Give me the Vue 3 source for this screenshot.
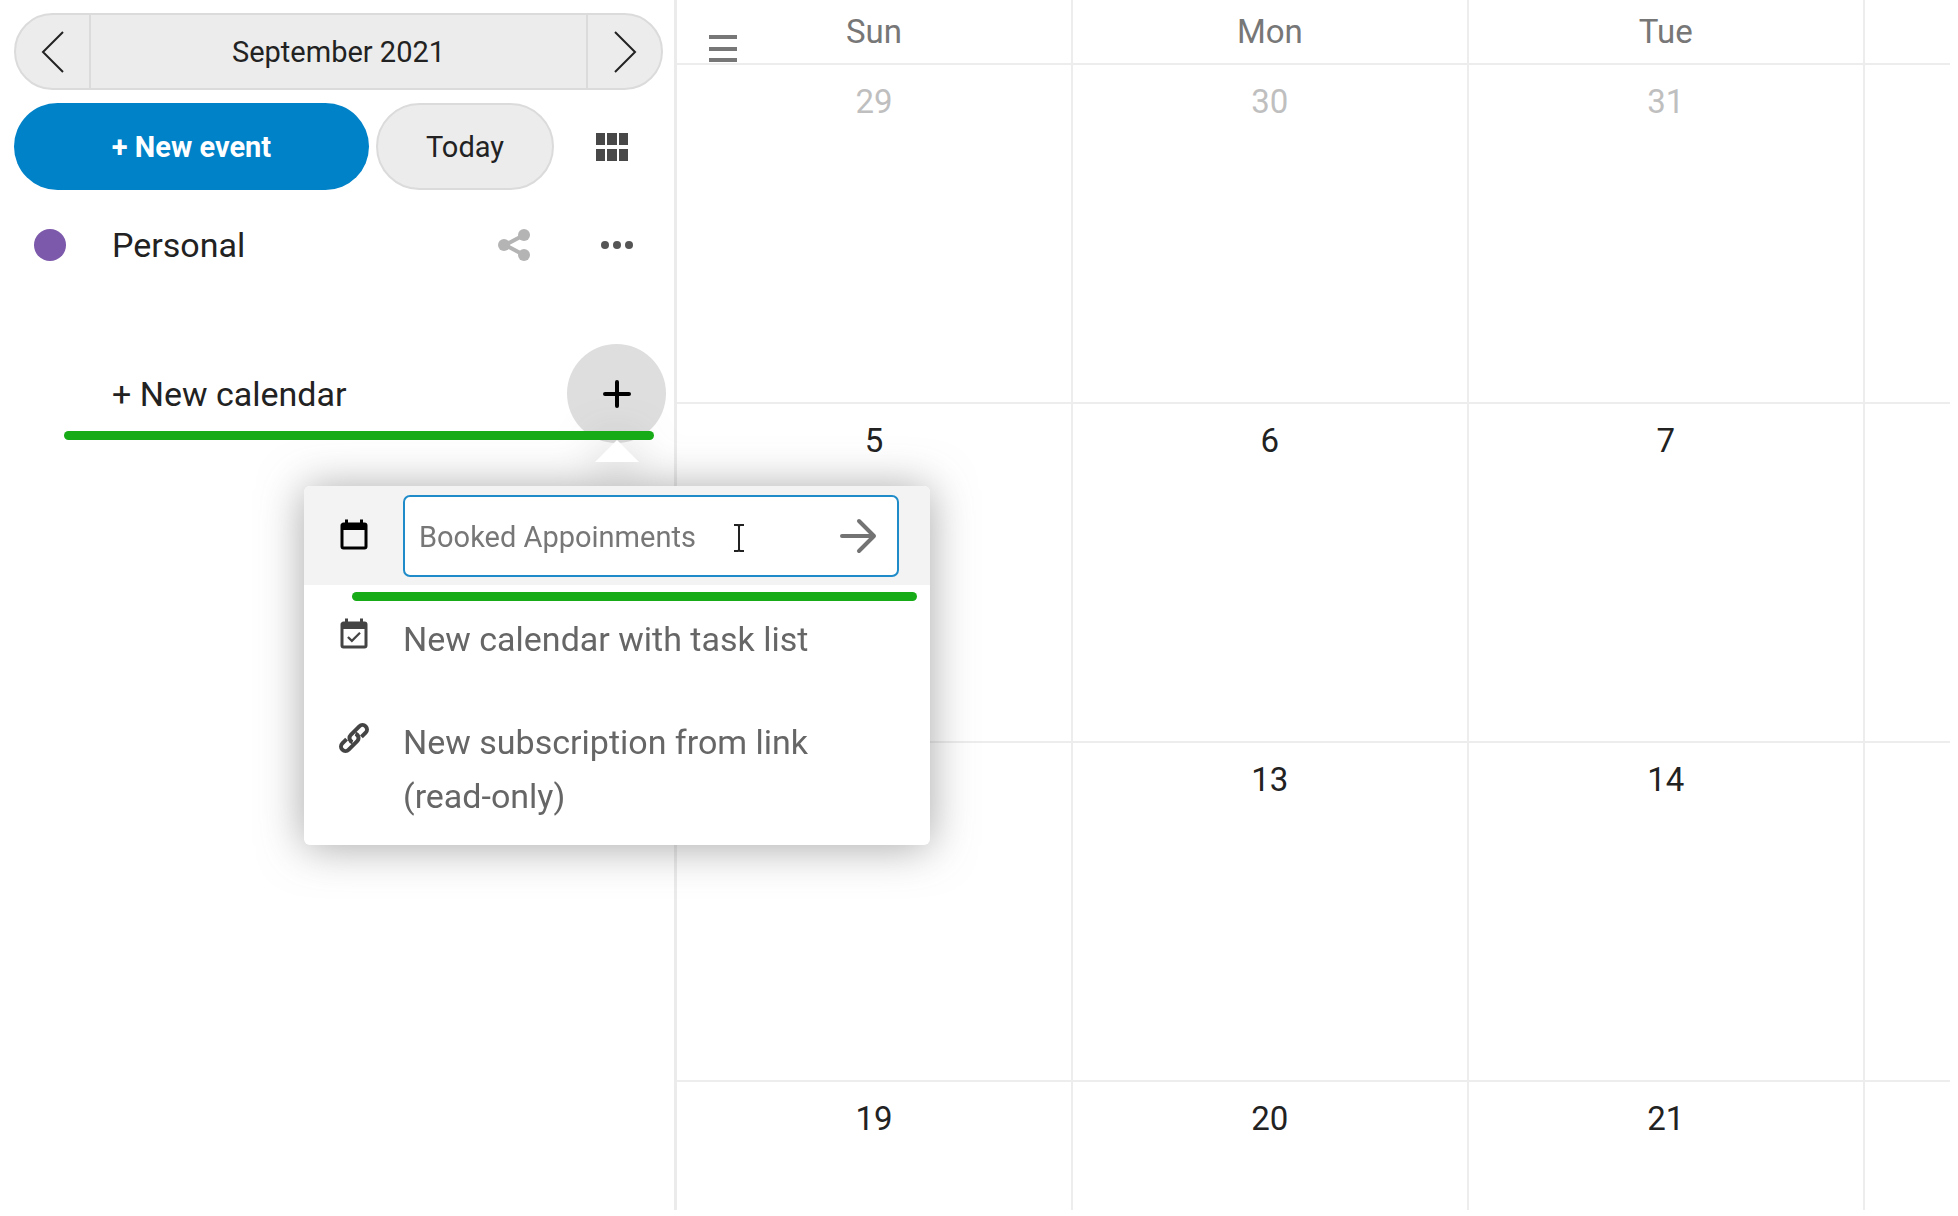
<script setup>
import { ref } from 'vue'

const weekdays = ['Sun', 'Mon', 'Tue', '']
const weeks = [
  { muted: true, days: ['29', '30', '31', ''] },
  { muted: false, days: ['5', '6', '7', ''] },
  { muted: false, days: ['12', '13', '14', ''] },
  { muted: false, days: ['19', '20', '21', ''] },
]
const calendarName = ref('Booked Appoinments')
</script>

<template>
  <div class="page">
    <aside class="sidebar">
      <div class="month-nav">
        <button class="month-step" aria-label="Previous month">
          <svg width="24" height="44" viewBox="0 0 24 44"><path d="M22 2 2 22l20 20" fill="none" stroke="#222" stroke-width="2" /></svg>
        </button>
        <button class="month-label">September 2021</button>
        <button class="month-step" aria-label="Next month">
          <svg width="24" height="44" viewBox="0 0 24 44"><path d="M2 2l20 20L2 42" fill="none" stroke="#222" stroke-width="2" /></svg>
        </button>
      </div>

      <div class="actions">
        <button class="pill primary">+ New event</button>
        <button class="pill today">Today</button>
        <button class="icon-button view" aria-label="Change view">
          <svg width="32" height="28" viewBox="0 0 32 28" fill="#484848">
            <path d="M0 0h9v12H0zM11 0h10v12H11zM23 0h9v12h-9zM0 16h9v12H0zM11 16h10v12H11zM23 16h9v12h-9z" />
          </svg>
        </button>
      </div>

      <div class="entry">
        <span class="entry-icon"><span class="dot"></span></span>
        <span class="entry-name">Personal</span>
        <button class="icon-button" aria-label="Share calendar">
          <svg width="34" height="34" viewBox="0 0 34 34" fill="#b4b4b4">
            <path d="M27 7 8 17l19 10" fill="none" stroke="#b4b4b4" stroke-width="4" />
            <circle cx="27" cy="7" r="6" /><circle cx="7" cy="17" r="6" /><circle cx="27" cy="27" r="6" />
          </svg>
        </button>
        <button class="icon-button" aria-label="Calendar options">
          <svg width="34" height="10" viewBox="0 0 34 10" fill="#555">
            <circle cx="5" cy="5" r="4" /><circle cx="17" cy="5" r="4" /><circle cx="29" cy="5" r="4" />
          </svg>
        </button>
      </div>

      <div class="entry new-calendar">
        <span class="entry-icon"></span>
        <span class="entry-name">+ New calendar</span>
        <button class="icon-button active" aria-label="Add calendar">
          <svg width="28" height="28" viewBox="0 0 28 28"><path d="M14 2v24M2 14h24" stroke="#000" stroke-width="4" stroke-linecap="round" /></svg>
        </button>
        <span class="marker marker-entry"></span>

        <div class="menu">
          <span class="arrow"></span>
          <form class="menu-row editing" @submit.prevent>
            <label class="menu-icon" for="calendar-name" aria-label="Calendar name">
              <svg width="36" height="36" viewBox="0 0 24 24"><path d="M19 19H5V8H19M19 3H18V1H16V3H8V1H6V3H5C3.9 3 3 3.9 3 5V19A2 2 0 0 0 5 21H19A2 2 0 0 0 21 19V5A2 2 0 0 0 19 3Z" /></svg>
            </label>
            <div class="name-field">
              <input id="calendar-name" v-model="calendarName" type="text" />
              <button class="submit" type="submit" aria-label="Create calendar">
                <svg width="38" height="36" viewBox="0 0 38 36"><path d="M3 18h31M20 3l15 15-15 15" fill="none" stroke="#737373" stroke-width="4" stroke-linecap="round" stroke-linejoin="round" /></svg>
              </button>
              <svg class="cursor" width="16" height="34" viewBox="0 0 16 34" fill="none">
                <path d="M3 4h4l1 1 1-1h4M8 5v24M3 30h4l1-1 1 1h4" stroke="#fff" stroke-width="5" />
                <path d="M3 4h4l1 1 1-1h4M8 5v24M3 30h4l1-1 1 1h4" stroke="#222" stroke-width="2" />
              </svg>
            </div>
          </form>
          <button class="menu-row">
            <span class="menu-icon">
              <svg width="36" height="36" viewBox="0 0 24 24" fill="#444"><path d="M19 19H5V8H19M19 3H18V1H16V3H8V1H6V3H5C3.9 3 3 3.9 3 5V19A2 2 0 0 0 5 21H19A2 2 0 0 0 21 19V5A2 2 0 0 0 19 3M16.53 11.06 15.47 10 10.59 14.88 8.47 12.76 7.41 13.82 10.59 17Z" /></svg>
            </span>
            <span class="menu-text">New calendar with task list</span>
          </button>
          <button class="menu-row">
            <span class="menu-icon">
              <svg width="36" height="36" viewBox="0 0 36 36" fill="none" stroke="#444" stroke-width="4">
                <g transform="rotate(-45 18 18)">
                  <path d="M24 22.500H30A4.500 4.500 0 0 0 30 13.500H18A4.500 4.500 0 0 0 14 20" />
                  <path d="M12 13.500H6A4.500 4.500 0 0 0 6 22.500H18A4.500 4.500 0 0 0 22 16" />
                </g>
              </svg>
            </span>
            <span class="menu-text">New subscription from link (read-only)</span>
          </button>
          <span class="marker marker-menu"></span>
        </div>
      </div>
    </aside>

    <main class="calendar">
      <button class="toggle" aria-label="Toggle sidebar">
        <svg width="28" height="28" viewBox="0 0 28 28" fill="#777"><path d="M0 0h28v4H0zM0 12h28v4H0zM0 23h28v4H0z" /></svg>
      </button>
      <table>
        <colgroup><col class="day" /><col class="day" /><col class="day" /><col /></colgroup>
        <thead>
          <tr><th v-for="(day, i) in weekdays" :key="i" scope="col">{{ day }}</th></tr>
        </thead>
        <tbody>
          <tr v-for="(week, w) in weeks" :key="w" :class="{ muted: week.muted }">
            <td v-for="(day, d) in week.days" :key="d">{{ day }}</td>
          </tr>
        </tbody>
      </table>
    </main>
  </div>
</template>

<style>
body {
  margin: 0;
  background: #fff;
}
</style>

<style scoped>
.page {
  display: flex;
  padding: 0 8px 6px 0;
  font-family: Roboto, "Liberation Sans", sans-serif;
  font-size: 34px;
  color: #222;
}
.page * {
  box-sizing: border-box;
}
button {
  margin: 0;
  padding: 0;
  border: 0;
  background: none;
  color: inherit;
  font: inherit;
  cursor: pointer;
}
svg {
  display: block;
  flex: none;
}
.sidebar {
  flex: none;
  width: 677px;
  padding-top: 13px;
  border-right: 3px solid #ebebeb;
}
.month-nav {
  display: flex;
  height: 77px;
  margin: 0 11px 13px 14px;
  border: 2px solid #dbdbdb;
  border-radius: 39px;
  background: #ececec;
  overflow: hidden;
}
.month-step {
  display: flex;
  align-items: center;
  justify-content: center;
  width: 73px;
}
.month-label {
  flex: 1;
  border: solid #dbdbdb;
  border-width: 0 2px;
  font-size: 29px;
}
.actions {
  display: flex;
  gap: 7px;
  height: 87px;
  margin: 0 11px 5px 14px;
}
.pill {
  border-radius: 44px;
  font-size: 29px;
}
.primary {
  flex: 1;
  background: #0082c9;
  color: #fff;
  font-weight: 700;
}
.today {
  width: 178px;
  border: 2px solid #dbdbdb;
  background: #ececec;
}
.icon-button {
  display: flex;
  flex: none;
  align-items: center;
  justify-content: center;
  width: 99px;
  height: 99px;
  border-radius: 50%;
}
.view {
  width: 102px;
  height: 87px;
}
.active {
  background: #dedede;
}
.entry {
  display: flex;
  align-items: center;
  gap: 4px;
  height: 99px;
  padding-right: 8px;
}
.entry-icon {
  display: flex;
  justify-content: center;
  width: 99px;
}
.dot {
  width: 32px;
  height: 32px;
  border-radius: 50%;
  background: #7c59ab;
}
.entry-name {
  flex: 1;
  padding-left: 9px;
}
.new-calendar {
  position: relative;
  margin-top: 50px;
}
.marker {
  position: absolute;
  height: 9px;
  border-radius: 5px;
  background: #18ab18;
}
.marker-entry {
  z-index: 3;
  top: 87px;
  left: 64px;
  right: 20px;
}
.arrow {
  position: absolute;
  top: -46px;
  right: 291px;
  border: solid transparent;
  border-width: 0 22px 22px;
  border-bottom-color: #fff;
}
.menu {
  position: absolute;
  z-index: 2;
  top: 142px;
  left: 304px;
  width: 626px;
  border-radius: 6px;
  background: #fff;
  filter: drop-shadow(0 2px 22px rgba(77, 77, 77, 0.5));
}
.menu-row {
  display: flex;
  width: 100%;
  color: #666;
  text-align: left;
}
.editing {
  align-items: center;
  padding-right: 31px;
  border-radius: 6px 6px 0 0;
  background: #f3f3f3;
}
.menu-icon {
  display: flex;
  flex: none;
  align-items: center;
  justify-content: center;
  width: 99px;
  height: 99px;
}
.menu-text {
  padding: 27px 80px 22px 0;
  line-height: 54px;
}
.name-field {
  position: relative;
  display: flex;
  flex: 1;
  height: 82px;
  border: 2px solid #1f8cc9;
  border-radius: 7px;
  background: #fff;
}
.name-field input {
  flex: 1;
  min-width: 0;
  padding: 2px 13px 0 14px;
  border: 0;
  outline: 0;
  background: none;
  color: #777;
  font: inherit;
  font-size: 29px;
}
.submit {
  display: flex;
  align-items: center;
  justify-content: center;
  width: 78px;
}
.cursor {
  position: absolute;
  top: 24px;
  left: 326px;
}
.marker-menu {
  top: 106px;
  left: 48px;
  right: 13px;
}
.calendar {
  position: relative;
  flex: 1;
  min-width: 0;
}
.toggle {
  position: absolute;
  top: 35px;
  left: 32px;
}
table {
  width: 100%;
  table-layout: fixed;
  border-spacing: 0;
  font-size: 33px;
}
.day {
  width: 31.1%;
}
th,
td {
  padding: 0;
  border: solid #ededed;
  border-width: 0 2px 2px 0;
  text-align: center;
  line-height: 40px;
}
th:last-child,
td:last-child {
  border-right: 0;
}
th {
  height: 65px;
  color: #777;
  font-weight: 400;
}
td {
  height: 339px;
  padding-top: 17px;
  vertical-align: top;
}
.muted td {
  color: #bfbfbf;
}
tr:last-child td {
  height: 128px;
  border-bottom: 0;
}
</style>
